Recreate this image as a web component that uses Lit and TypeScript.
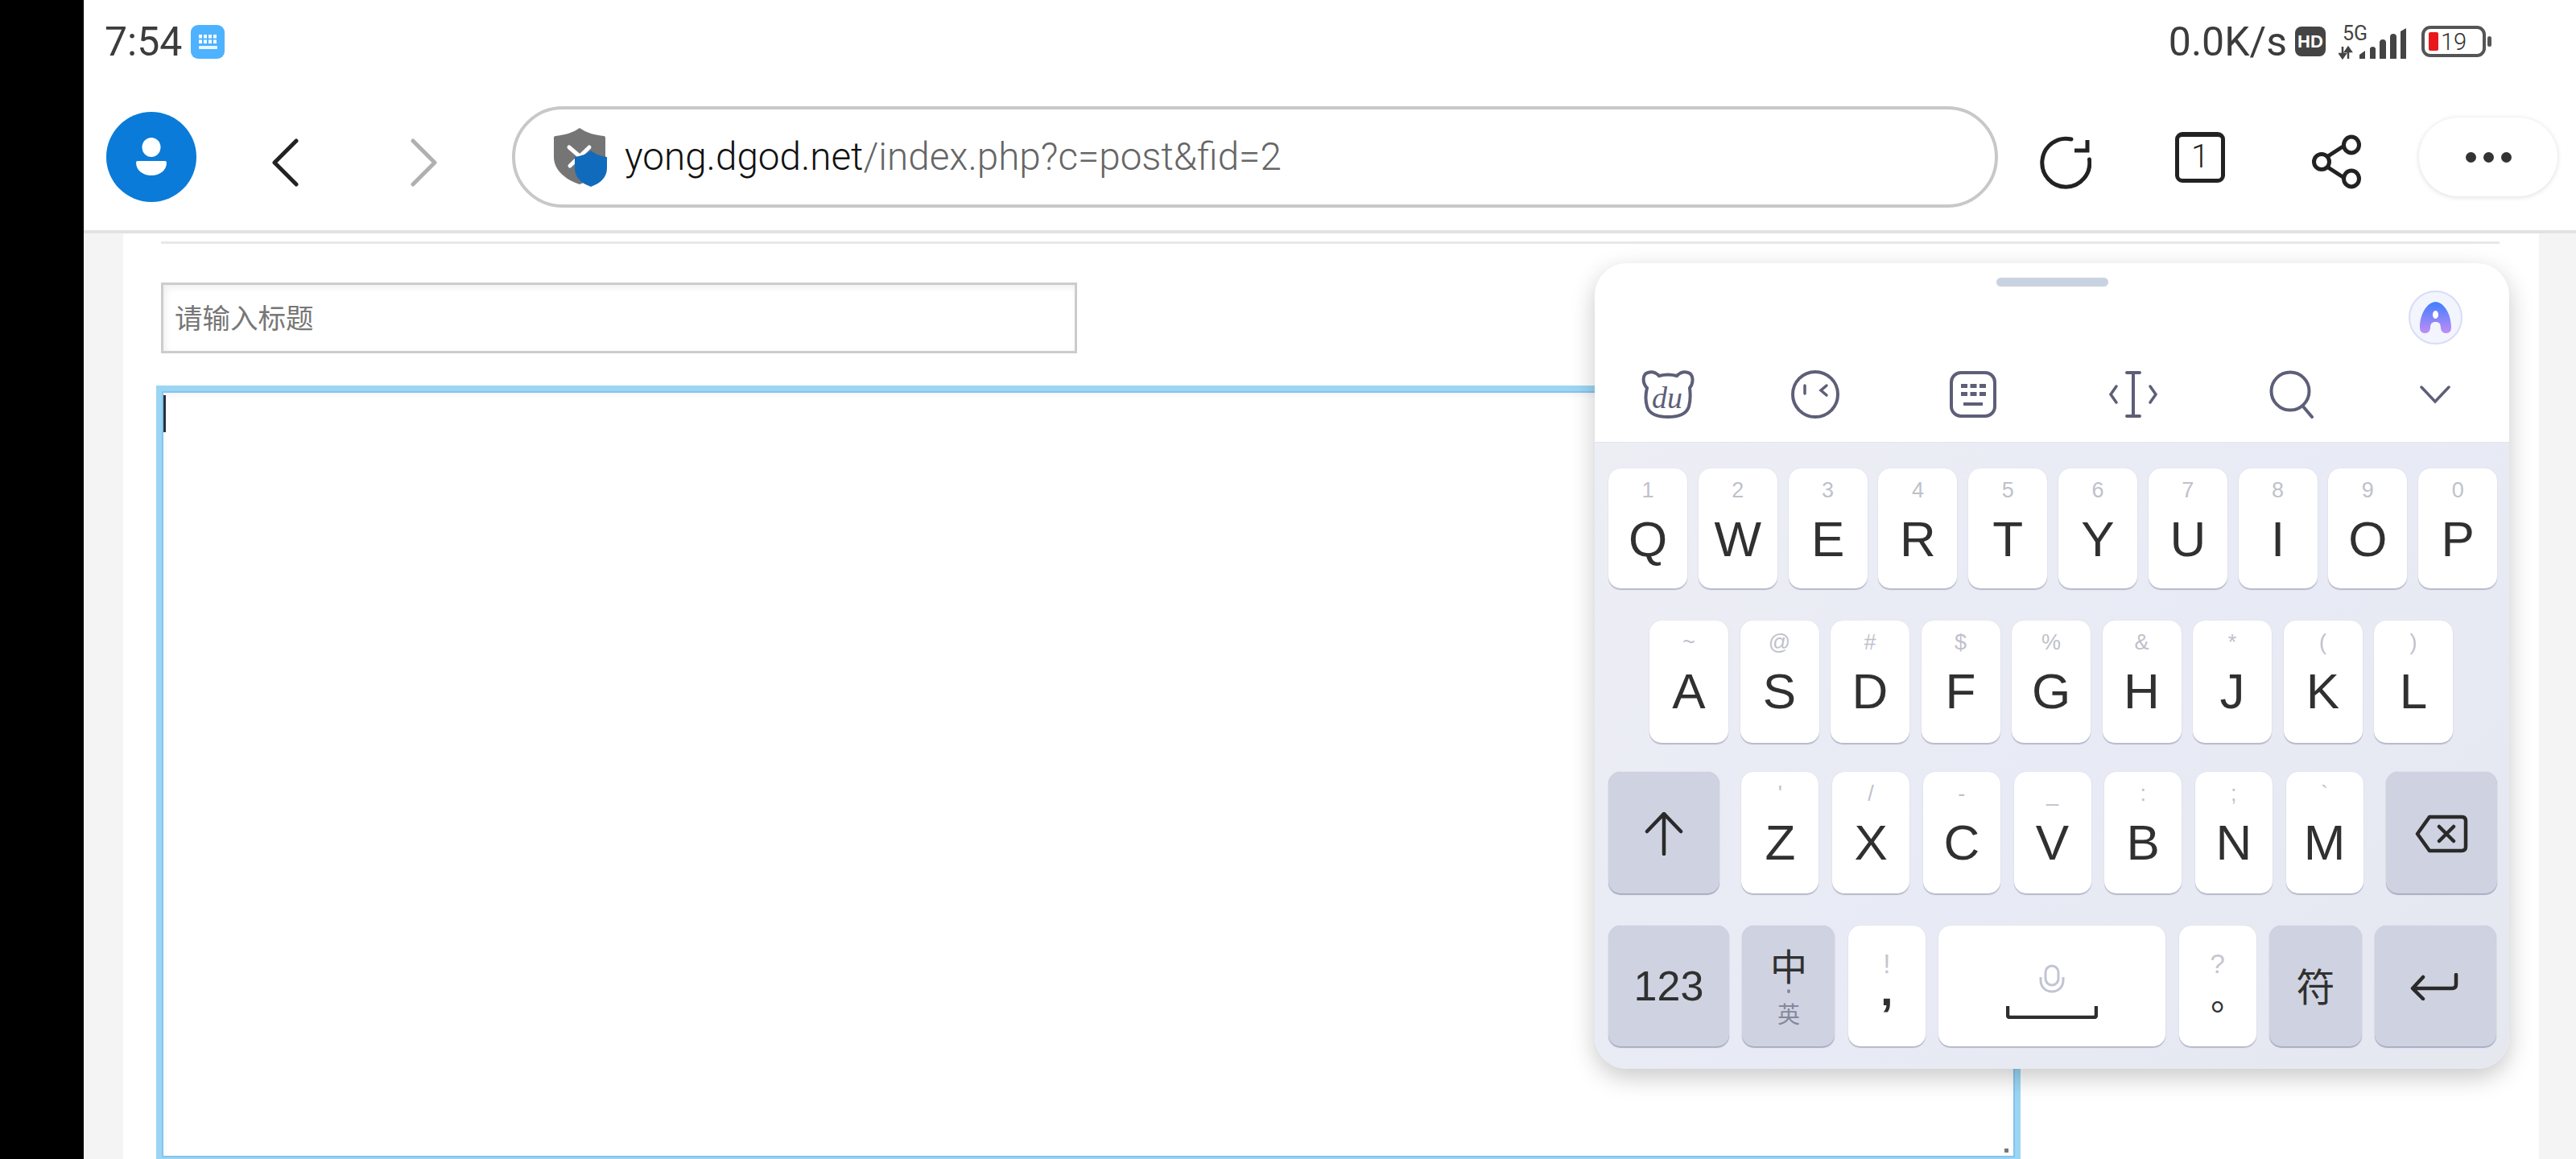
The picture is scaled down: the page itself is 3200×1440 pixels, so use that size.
import { LitElement, html, css, svg } from "lit";
import { customElement } from "lit/decorators.js";

const row1 = [["1","Q"],["2","W"],["3","E"],["4","R"],["5","T"],["6","Y"],["7","U"],["8","I"],["9","O"],["0","P"]];
const row2 = [["~","A"],["@","S"],["#","D"],["$","F"],["%","G"],["&","H"],["*","J"],["(","K"],[")","L"]];
const row3 = [["'","Z"],["/","X"],["-","C"],["_","V"],[":","B"],[";","N"],["`","M"]];

@customElement("app-root")
export class AppRoot extends LitElement {
  static styles = css`
    :host { display: block; width: 3200px; height: 1440px; overflow: hidden; font-family: "Roboto", "Noto Sans CJK SC", sans-serif; }
    svg { display: block; flex: none; }
    .screen { position: relative; display: flex; width: 3200px; height: 1440px; overflow: hidden; background: #fff; }
    .bezel { width: 104px; flex: none; background: #000; }
    .main { flex: 1; display: flex; flex-direction: column; min-width: 0; }

    .status { height: 100px; flex: none; display: flex; align-items: center; padding: 3px 105px 0 26px; box-sizing: border-box; color: #3c3c3c; }
    .time { font-size: 50px; line-height: 60px; width: 107px; }
    .status-right { margin-left: auto; display: flex; align-items: center; }
    .speed { font-size: 50px; line-height: 60px; margin-right: 10px; }
    .hd { width: 38px; height: 37px; border-radius: 8px; background: #444; color: #fff; font: 700 22px/37px "Liberation Sans", sans-serif; text-align: center; margin-right: 16px; }
    .signal { margin-right: 19px; margin-top: -6px; }

    .toolbar { height: 190px; flex: none; display: flex; align-items: center; box-sizing: border-box; padding: 4px 0 0 28px; border-bottom: 4px solid #e2e2e2; }
    .avatar { width: 112px; height: 112px; }
    .back { margin: 14px 0 0 93px; }
    .forward { margin: 14px 0 0 139px; }
    .url { margin-left: 92px; width: 1846px; height: 126px; box-sizing: border-box; border: 4px solid #c8c8c8; border-radius: 63px; display: flex; align-items: center; padding-left: 48px; font-size: 47.6px; font-weight: 300; color: #111; white-space: nowrap; }
    .url svg { margin-right: 22px; }
    .path { color: #666; }
    .reload { margin: 13px 0 0 52px; }
    .tab { margin-left: 104px; width: 62px; height: 63px; box-sizing: border-box; border: 5px solid #222; border-top-width: 6px; border-radius: 9px; text-align: center; font-size: 40px; font-weight: 300; line-height: 50px; color: #222; }
    .share { margin: 12px 0 0 108px; }
    .more { margin-left: 71px; width: 172px; height: 98px; border-radius: 49px; background: #fff; box-shadow: 0 1px 6px rgba(0,0,0,.14); display: flex; align-items: center; justify-content: center; gap: 9px; }
    .more i { width: 13px; height: 13px; border-radius: 50%; background: #333; }

    .page { flex: 1; min-height: 0; background: #f4f4f4; padding: 0 46px 0 49px; display: flex; }
    .card { flex: 1; background: #fff; padding: 10px 49px 0 47px; min-width: 0; }
    .rule { height: 3px; background: #e8e8e8; }
    .title { margin-top: 48px; width: 1138px; height: 88px; box-sizing: border-box; border: 3px solid #ccc; box-shadow: inset 3px 3px 8px rgba(0,0,0,.07); padding: 0 0 4px 14px; display: flex; align-items: center; font: 34.5px "Noto Sans CJK SC", sans-serif; color: #777; }
    .editor { position: relative; margin: 47px 0 0 1px; width: 2302px; height: 952px; box-sizing: border-box; border: 2px solid #85c3ee; outline: 7px solid #9ad6f3; box-shadow: inset 0 3px 8px rgba(0,0,0,.05); }
    .caret { position: absolute; left: 0; top: 3px; width: 3px; height: 46px; background: #263238; }
    .grip { position: absolute; right: 6px; bottom: 4px; width: 5px; height: 5px; background: #777; }

    .kb { position: absolute; left: 1981px; top: 327px; width: 1136px; height: 1001px; border-radius: 40px; overflow: hidden; background: linear-gradient(135deg, #eeeff4 0%, #e8eaf5 55%, #e6e8f0 100%); box-shadow: 0 10px 30px rgba(0,0,0,.22); display: flex; flex-direction: column; }
    .kb-top { height: 223px; flex: none; background: #fff; box-sizing: border-box; border-bottom: 1px solid #e4e5ec; display: flex; flex-direction: column; }
    .handle { width: 139px; height: 11px; border-radius: 6px; background: #c9d2e0; margin: 18px auto 0; }
    .ai-row { display: flex; justify-content: flex-end; padding-right: 58px; margin-top: 5px; }
    .ai { width: 67px; height: 67px; box-sizing: border-box; border-radius: 50%; background: #f2f5fd; border: 2px solid #d8ddf3; display: flex; align-items: center; justify-content: center; }
    .tools { height: 62px; margin-top: 31px; display: flex; align-items: center; padding-left: 57px; }
    .tools .face { margin-left: 119px; }
    .tools .board { margin-left: 137px; }
    .tools .cur { margin-left: 139px; }
    .tools .find { margin-left: 138px; }
    .tools .down { margin-left: 131px; }

    .keys { flex: 1; padding: 32px 15px 0 17px; display: flex; flex-direction: column; }
    .row { display: flex; }
    .r1 { height: 149px; gap: 13.8px; margin-bottom: 40px; }
    .r2 { height: 152px; gap: 14.5px; margin-bottom: 36px; padding-left: 51px; }
    .r3 { height: 151px; justify-content: space-between; margin-bottom: 40px; }
    .r4 { height: 150px; gap: 16.4px; }
    .group { display: flex; gap: 16.7px; margin-left: -1px; }
    .key { width: 98px; height: 100%; box-sizing: border-box; border-radius: 15px; background: #fff; box-shadow: 0 2px 1px #b7bac9, 0 0 1px #c5c8d6; display: flex; flex-direction: column; align-items: center; color: #303030; font-family: "Liberation Sans", sans-serif; flex: none; }
    .r3 .key, .r4 .key { width: 96px; }
    .key .hint { height: 30px; line-height: 30px; margin-top: 12px; font-size: 27px; color: #bfc1cb; }
    .key .ch { height: 62px; line-height: 62px; margin-top: 15px; font-size: 62px; }
    .dark { background: #cfd2e0; box-shadow: 0 2px 1px #a9adc3, 0 0 1px #b0b4c8; justify-content: center; }
    .r3 .k-shift, .r3 .k-del { width: 138px; }
    .r4 .k-num { width: 150px; font-size: 52px; }
    .r4 .k-lang { width: 115px; }
    .r4 .k-sym { width: 115px; font: 48px "Noto Sans CJK SC", sans-serif; padding-bottom: 5px; }
    .r4 .k-ret { width: 151px; }
    .r4 .k-space { width: 282px; justify-content: flex-start; }
    .lang-main { font: 46px/46px "Noto Sans CJK SC", sans-serif; margin-top: -3px; }
    .lang-dot { width: 4px; height: 5px; background: #85879c; border-radius: 50%; margin-top: 8px; }
    .lang-sub { font: 28px/28px "Noto Sans CJK SC", sans-serif; color: #85879c; margin-top: 11px; }
    .k-p .hint { margin-top: 33px; height: 30px; font-size: 33px; font-weight: 300; color: #c4c6d0; }
    .k-p .punct { height: 30px; line-height: 30px; margin-top: 2px; font-size: 56px; font-weight: 700; }
    .k-p .circle { height: 50px; margin-top: 11px; font: 44px/50px "Noto Sans CJK TC", sans-serif; }
    .mic { margin-top: 48px; }
    .bar { margin-top: 16px; }
    .k-shift svg { margin-top: 2px; }
    .k-del svg { margin-top: 3px; }
    .k-ret svg { margin: 2px 0 0 -4px; }
  `;

  private key(h: string, c: string) {
    return html`<div class="key"><span class="hint">${h}</span><span class="ch">${c}</span></div>`;
  }

  render() {
    return html`
      <div class="screen">
        <div class="bezel"></div>
        <div class="main">
          <div class="status">
            <span class="time">7:54</span>
            <svg width="42" height="42" viewBox="0 0 42 42">
              <rect width="42" height="42" rx="9" fill="#4db2ff"/>
              ${[0,1,2,3].map(i => [0,1].map(j => svg`<rect x="${10 + i * 6}" y="${12 + j * 6.5}" width="4" height="4.5" fill="#fff"/>`))}
              <rect x="10" y="26" width="23" height="4" rx="1" fill="#e6f5ff"/>
            </svg>
            <div class="status-right">
              <span class="speed">0.0K/s</span>
              <div class="hd">HD</div>
              <svg class="signal" width="84" height="50" viewBox="0 -6 84 50">
                <text x="5" y="20" font-family="Roboto" font-size="25" fill="#444">5G</text>
                <path d="M5 28v14M1.5 37l3.5 5 3.5-5zM12 43V29M8.5 34l3.5-5 3.5 5z" stroke="#444" stroke-width="2.5" fill="#444"/>
                <path d="M26 38l7-5v10h-7zM39 30a4 4 0 0 1 7 0v13h-7zM51 23a4 4 0 0 1 8 0v20h-8zM64 16a4 4 0 0 1 8 0v27h-8zM77 9l7-4v38h-7z" fill="#444"/>
              </svg>
              <svg width="87" height="40" viewBox="0 0 87 40">
                <rect x="2" y="2" width="76" height="35" rx="9" fill="none" stroke="#555" stroke-width="4"/>
                <rect x="9" y="8" width="12" height="23" rx="2" fill="#e8191d"/>
                <text x="24" y="30" font-family="Roboto" font-weight="300" font-size="29" fill="#333">19</text>
                <rect x="82" y="13" width="5" height="13" rx="2.5" fill="#555"/>
              </svg>
            </div>
          </div>

          <div class="toolbar">
            <svg class="avatar" viewBox="0 0 112 112">
              <circle cx="56" cy="56" r="56" fill="#0a7bd8"/>
              <ellipse cx="56" cy="44" rx="11.5" ry="12" fill="#fff"/>
              <path d="M39 61H73Q75 61 75 63C75 73 66 79 56 79C46 79 37 73 37 63Q37 61 39 61Z" fill="#fff"/>
            </svg>
            <svg class="back" width="34" height="60" viewBox="0 0 34 60"><path d="M31 3L4 30l27 27" fill="none" stroke="#222" stroke-width="5" stroke-linecap="round" stroke-linejoin="round"/></svg>
            <svg class="forward" width="34" height="60" viewBox="0 0 34 60"><path d="M3 3l27 27L3 57" fill="none" stroke="#b0b0b0" stroke-width="5" stroke-linecap="round" stroke-linejoin="round"/></svg>
            <div class="url">
              <svg width="66" height="73" viewBox="0 0 66 73">
                <path d="M32 0C40 6 52 9 62 10Q64 10 64 12V36C64 52 50 64 32 70C14 64 0 52 0 36V12Q0 10 2 10C12 9 24 6 32 0Z" fill="#757575"/>
                <path d="M19 24L33 36M44 24L20 47" stroke="#fff" stroke-width="5" stroke-linecap="round"/>
                <path d="M46 28C52 33 59 35 66 36V50C66 62 57 69 46 73C35 69 26 62 26 50V36C33 35 40 33 46 28Z" fill="#116bbd"/>
              </svg>
              <span>yong.dgod.net<span class="path">/index.php?c=post&amp;fid=2</span></span>
            </div>
            <svg class="reload" width="64" height="66" viewBox="0 0 64 66">
              <path d="M61.5 29A29.5 30 0 1 1 39 4" fill="none" stroke="#222" stroke-width="5" stroke-linecap="round"/>
              <path d="M59 5V18H43" fill="none" stroke="#222" stroke-width="5"/>
            </svg>
            <div class="tab">1</div>
            <svg class="share" width="62" height="68" viewBox="0 0 62 68">
              <path d="M20 27L40 14M20 41L40 54" stroke="#222" stroke-width="5"/>
              <ellipse cx="12" cy="34" rx="9.5" ry="9.5" fill="#fff" stroke="#222" stroke-width="5"/>
              <ellipse cx="49" cy="13" rx="9.5" ry="10" fill="#fff" stroke="#222" stroke-width="5"/>
              <ellipse cx="49" cy="55" rx="9.5" ry="10" fill="#fff" stroke="#222" stroke-width="5"/>
            </svg>
            <div class="more"><i></i><i></i><i></i></div>
          </div>

          <div class="page">
            <div class="card">
              <div class="rule"></div>
              <div class="title">请输入标题</div>
              <div class="editor"><div class="caret"></div><div class="grip"></div></div>
            </div>
          </div>
        </div>

        <div class="kb">
          <div class="kb-top">
            <div class="handle"></div>
            <div class="ai-row">
              <div class="ai">
                <svg width="39" height="39" viewBox="0 0 39 39">
                  <defs><linearGradient id="ag" x1="0" y1="0" x2="0" y2="1"><stop offset="0" stop-color="#3f7fff"/><stop offset="1" stop-color="#c08cf5"/></linearGradient></defs>
                  <path d="M6 39Q0 39 0 32C0 14 10 0 19.5 0C29 0 39 14 39 32Q39 39 33 39Q27 39 26 33C26 27 24 25 19.5 25C15 25 13 27 13 33Q12 39 6 39Z" fill="url(#ag)"/>
                  <ellipse cx="19.5" cy="16" rx="3.5" ry="5" fill="#fff"/>
                </svg>
              </div>
            </div>
            <div class="tools">
              <svg width="68" height="60" viewBox="0 0 68 60">
                <path d="M8 22C2 16 2 5 9 3C15 1 19 3 23 7Q34 4 45 7C49 3 53 1 59 3C66 5 66 16 61 22C62 30 62 38 60 45C57 55 46 58 34 58C22 58 11 55 8 45C6 38 6 30 8 22Z" fill="none" stroke="#5d5f78" stroke-width="4"/>
                <text x="33" y="47" text-anchor="middle" font-family="Liberation Serif" font-style="italic" font-size="38" fill="#5d5f78">du</text>
              </svg>
              <svg class="face" width="60" height="62" viewBox="0 0 60 62">
                <circle cx="30" cy="31" r="28" fill="none" stroke="#5d5f78" stroke-width="4"/>
                <path d="M17 20V30" stroke="#5d5f78" stroke-width="3.5" stroke-linecap="round"/>
                <path d="M44 20L37 26L44 32" fill="none" stroke="#5d5f78" stroke-width="3.5" stroke-linecap="round"/>
              </svg>
              <svg class="board" width="58" height="58" viewBox="0 0 58 58">
                <rect x="2" y="2" width="54" height="54" rx="12" fill="none" stroke="#5d5f78" stroke-width="4"/>
                ${[0,1,2].map(i => [0,1].map(j => svg`<rect x="${14 + i * 11.5}" y="${16 + j * 10}" width="8" height="5" fill="#5d5f78"/>`))}
                <rect x="17" y="39" width="24" height="4" fill="#5d5f78"/>
              </svg>
              <svg class="cur" width="62" height="58" viewBox="0 0 62 58">
                <path d="M23 2H39M31 2V56M23 56H39" fill="none" stroke="#5d5f78" stroke-width="4" stroke-linecap="round"/>
                <path d="M10 19L3 29L10 39M52 19L59 29L52 39" fill="none" stroke="#5d5f78" stroke-width="3.5" stroke-linecap="round"/>
              </svg>
              <svg class="find" width="56" height="60" viewBox="0 0 56 60">
                <circle cx="26" cy="26" r="23.5" fill="none" stroke="#5d5f78" stroke-width="4"/>
                <path d="M42 45L53 58" stroke="#5d5f78" stroke-width="4" stroke-linecap="round"/>
              </svg>
              <svg class="down" width="38" height="24" viewBox="0 0 38 24"><path d="M2 3L19 21L36 3" fill="none" stroke="#5d5f78" stroke-width="3.5" stroke-linecap="round"/></svg>
            </div>
          </div>

          <div class="keys">
            <div class="row r1">${row1.map(k => this.key(k[0], k[1]))}</div>
            <div class="row r2">${row2.map(k => this.key(k[0], k[1]))}</div>
            <div class="row r3">
              <div class="key dark k-shift">
                <svg width="48" height="54" viewBox="0 0 48 54"><path d="M24 52V3M3 24L24 2L45 24" fill="none" stroke="#2a2a2a" stroke-width="4.5" stroke-linecap="round"/></svg>
              </div>
              <div class="group">${row3.map(k => this.key(k[0], k[1]))}</div>
              <div class="key dark k-del">
                <svg width="66" height="48" viewBox="0 0 66 48">
                  <path d="M18 3H58Q63 3 63 8V40Q63 45 58 45H18L3 24Z" fill="none" stroke="#2a2a2a" stroke-width="4.5" stroke-linejoin="round"/>
                  <path d="M30 15L48 33M48 15L30 33" stroke="#2a2a2a" stroke-width="4.5" stroke-linecap="round"/>
                </svg>
              </div>
            </div>
            <div class="row r4">
              <div class="key dark k-num">123</div>
              <div class="key dark k-lang">
                <span class="lang-main">中</span><span class="lang-dot"></span><span class="lang-sub">英</span>
              </div>
              <div class="key k-p"><span class="hint">!</span><span class="punct">,</span></div>
              <div class="key k-space">
                <svg class="mic" width="34" height="36" viewBox="0 0 34 36">
                  <rect x="9" y="2" width="16" height="24" rx="8" fill="none" stroke="#c2c4d3" stroke-width="3"/>
                  <path d="M3 16V20C3 28 9 34 17 34C25 34 31 28 31 20V16" fill="none" stroke="#c2c4d3" stroke-width="3"/>
                </svg>
                <svg class="bar" width="114" height="16" viewBox="0 0 114 16"><path d="M2 0V11Q2 14 5 14H109Q112 14 112 11V0" fill="none" stroke="#2e2e2e" stroke-width="4.5"/></svg>
              </div>
              <div class="key k-p"><span class="hint">?</span><span class="circle">。</span></div>
              <div class="key dark k-sym">符</div>
              <div class="key dark k-ret">
                <svg width="60" height="34" viewBox="0 0 60 34"><path d="M57 2V14Q57 19 52 19H4M16 5L3 19L16 32" fill="none" stroke="#2a2a2a" stroke-width="4.5" stroke-linecap="round" stroke-linejoin="round"/></svg>
              </div>
            </div>
          </div>
        </div>
      </div>
    `;
  }
}
